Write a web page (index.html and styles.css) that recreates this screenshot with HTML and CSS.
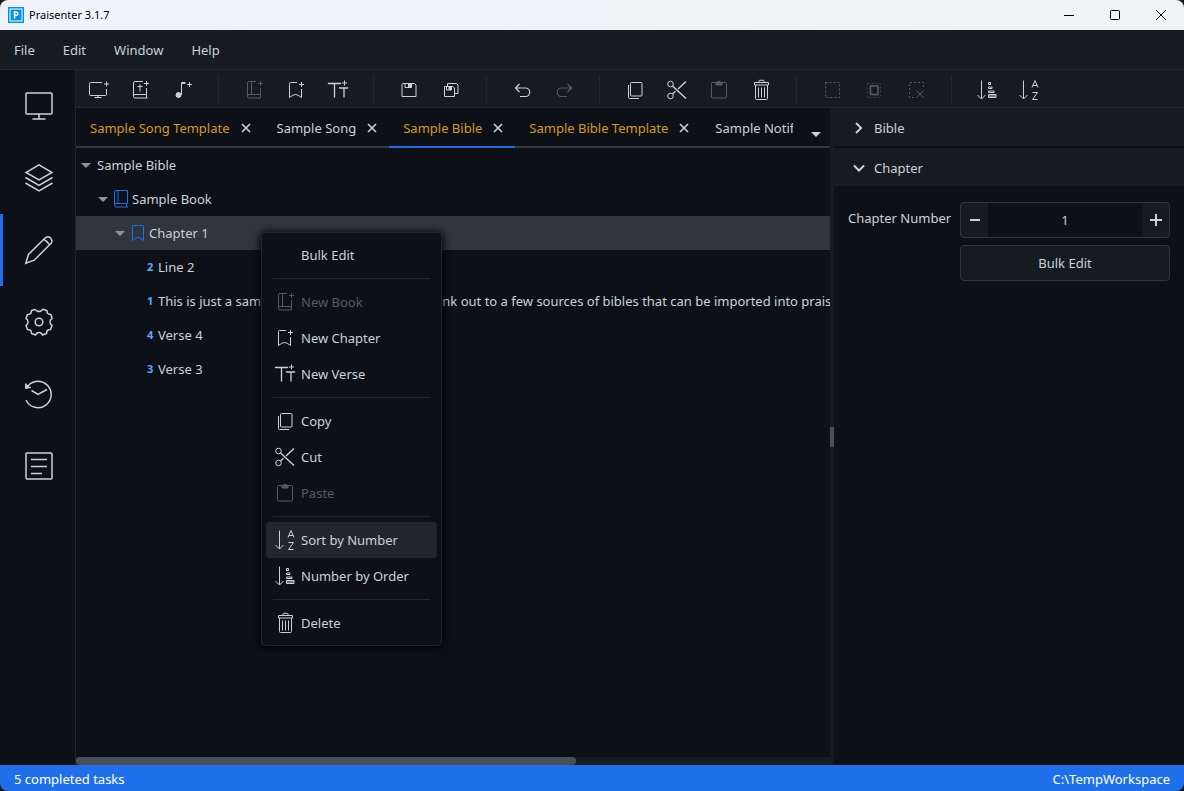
FILE: index.html
```html
<!DOCTYPE html>
<html lang="en">
<head>
<meta charset="utf-8">
<title>Praisenter 3.1.7</title>
<link rel="stylesheet" href="styles.css">
</head>
<body>
<svg class="sprite" aria-hidden="true">
  <symbol id="screen-add" viewBox="0 0 20 20"><path d="M14 2.500H2.500a1 1 0 0 0-1 1v11a1 1 0 0 0 1 1h15a1 1 0 0 0 1-1V9M10 15.500v2M6.500 17.500h7M18.500 1.500v5M16 4h5"/></symbol>
  <symbol id="bible-add" viewBox="0 0 20 20"><path d="M13 1.500H5a1.500 1.500 0 0 0-1.500 1.500v13.500a1.500 1.500 0 0 0 1.500 1.500h12.500M16.500 8v6.500H5a1.500 1.500 0 0 0-1.500 1.500M16.500 14.500v3.500M10 4.500v7M7.500 6.500h5M16.500 1v5M14 3.500h5"/></symbol>
  <symbol id="song-add" viewBox="0 0 20 20"><circle cx="6.500" cy="15" r="2.500" fill="currentColor"/><path d="M9.500 15V2.500h4M9.500 3.500h4M17.500 2v5M15 4.500h5"/></symbol>
  <symbol id="book-add" viewBox="0 0 20 20"><path d="M12 1.500H5a1.500 1.500 0 0 0-1.500 1.500v13.500a1.500 1.500 0 0 0 1.500 1.500h11.500M16.500 8v6.500H5a1.500 1.500 0 0 0-1.500 1.500M16.500 14.500v3.500M7.500 1.500v13M16.500 1v5M14 3.500h5"/></symbol>
  <symbol id="book" viewBox="0 0 20 20"><path d="M16.500 14.500V1.500H5a1.500 1.500 0 0 0-1.500 1.500v13.500a1.500 1.500 0 0 0 1.500 1.500h12M16.500 14.500H5a1.500 1.500 0 0 0-1.500 1.500M15.500 14.500v3.500M7 1.500v13"/></symbol>
  <symbol id="chapter-add" viewBox="0 0 20 20"><path d="M11 2.500H4.500a1 1 0 0 0-1 1V17.500q3.500-3 6-3t6 3V9M15.500 2v5M13 4.500h5"/></symbol>
  <symbol id="chapter" viewBox="0 0 20 20"><path d="M4.500 3a.8.8 0 0 1 .8-.5h9.400a.8.8 0 0 1 .8.8V17.500q-3-3-5.500-3t-5.500 3z"/></symbol>
  <symbol id="verse-add" viewBox="0 0 20 20"><path d="M.5 4V3.500h12V4M6.500 3.500v14M11.500 8.500V8h8v.5M16 8v9.500" stroke-width="1.300"/><path d="M16.500.5v5M14 3h5"/></symbol>
  <symbol id="save" viewBox="0 0 20 20"><path d="M4 3.500h11.500l1.500 1.500v11.500h-14V4.500a1 1 0 0 1 1-1zM6 4v3.500h6.500V4"/><path d="M9.500 4h3v3h-3z" fill="currentColor"/></symbol>
  <symbol id="save-all" viewBox="0 0 20 20"><path d="M3.500 6.500h8.500l1.500 1.500v8.500h-10zM6.500 6V3.500h9l1.500 1.500v8.500h-3M5.500 7v3h5V7"/><path d="M8 7h2.500v2.500H8z" fill="currentColor"/></symbol>
  <symbol id="undo" viewBox="0 0 20 20"><path d="M7.500 4 3.500 8l4 4M4 8h9.500a4.200 4.200 0 0 1 0 8.500H8" stroke-width="1.200"/></symbol>
  <symbol id="redo" viewBox="0 0 20 20"><path d="m13.500 4 4 4-4 4M17 8H7.500a4.200 4.200 0 0 0 0 8.500H13" stroke-width="1.200"/></symbol>
  <symbol id="copy" viewBox="0 0 20 20"><rect x="5.500" y="2.500" width="11.500" height="13.500" rx="1"/><path d="M3.500 5v12.500a1 1 0 0 0 1 1H14"/></symbol>
  <symbol id="cut" viewBox="0 0 20 20"><circle cx="3.500" cy="4" r="2.800"/><circle cx="3.500" cy="16" r="2.800"/><path d="M5.500 6 19 18.500M5.500 14 8.500 11.300M11 9l8-7.500" stroke-width="1.400"/></symbol>
  <symbol id="paste" viewBox="0 0 20 20"><rect x="2.500" y="2.500" width="15" height="15.500" rx="1"/><path d="M7 2.500 8.500 2q1.500-1.500 3 0l1.500.5v2.500H7z" fill="currentColor"/></symbol>
  <symbol id="trash" viewBox="0 0 20 20"><path d="M3.500 2.500h14v2.500h-14zM8 2.500V1a.7.700 0 0 1 .7-.7h3.600a.7.700 0 0 1 .7.700v1.500M4.500 5v13.500a1 1 0 0 0 1 1h10a1 1 0 0 0 1-1V5M7.500 7.500v10M10.500 7.500v10M13.500 7.500v10"/></symbol>
  <symbol id="select-all" viewBox="0 0 20 20"><rect x="3.500" y="2.500" width="14" height="15" stroke-dasharray="2 2"/></symbol>
  <symbol id="select-inner" viewBox="0 0 20 20"><rect x="3.500" y="3.500" width="13" height="14" stroke-dasharray="2 2" opacity=".6"/><rect x="6.500" y="6" width="7.500" height="8.500" stroke-width="1.600"/></symbol>
  <symbol id="select-none" viewBox="0 0 20 20"><path d="M8 17.500H3.500v-15h14V8" stroke-dasharray="2 2"/><path d="m10.500 10.500 7 7M17.500 10.500l-7 7"/></symbol>
  <symbol id="order" viewBox="0 0 20 20"><path d="M4.500.5v18M.5 15l4 4 4-4M11.500 2.500h2v2h-2zM11.500 7h3.500v1.500h-3.500zM11.500 11h5.500v1.500h-5.500zM11.500 14.500h7.500v3h-7.500z"/><path d="M11 16h8"/></symbol>
  <symbol id="sort" viewBox="0 0 20 20"><path d="M4.500.5v18M.5 15l4 4 4-4M13 7.500 16 .5l3 7M14 5.500h4M13.500 12.500h5l-5 7h5"/></symbol>
  <symbol id="chev-right" viewBox="0 0 12 12"><path d="m3 1 5 5-5 5" stroke-width="2"/></symbol>
  <symbol id="chev-down" viewBox="0 0 12 12"><path d="m1 3.500 5 5 5-5" stroke-width="2"/></symbol>
  <symbol id="cross" viewBox="0 0 10 10"><path d="m1 1 8 8M9 1 1 9" stroke-width="1.600"/></symbol>
</svg>

<div class="window">
  <header class="titlebar">
    <svg class="logo" viewBox="0 0 16 16" aria-hidden="true"><rect width="16" height="16" fill="#0093dd"/><rect x="2" y="2" width="12" height="12" fill="none" stroke="#fff"/><path d="M6.500 11.500V5h1.700a1.700 1.700 0 0 1 0 3.400H6.500" fill="none" stroke="#fff" stroke-width="1.600"/></svg>
    <span class="title">Praisenter 3.1.7</span>
    <div class="window-controls">
      <button aria-label="Minimize"><svg viewBox="0 0 12 12"><path d="M1 6.500h10"/></svg></button>
      <button aria-label="Maximize"><svg viewBox="0 0 12 12"><rect x="1.500" y="1.500" width="9" height="9" rx="1"/></svg></button>
      <button aria-label="Close"><svg viewBox="0 0 12 12"><path d="m1 1 10 10M11 1 1 11"/></svg></button>
    </div>
  </header>

  <nav class="menubar">
    <button>File</button><button>Edit</button><button>Window</button><button>Help</button>
  </nav>

  <div class="body">
    <nav class="sidebar">
      <button aria-label="Present"><svg viewBox="0 0 28 28"><rect x="1" y="1" width="26" height="21" rx="1"/><path d="M14 22v5M7.500 27h13"/></svg></button>
      <button aria-label="Library"><svg viewBox="0 0 28 28"><path d="M14 .8 27 8.500 14 16 1 8.500zM.5 13.500 14 21.500l13.500-8M.5 19 14 27l13.500-8"/></svg></button>
      <button class="current" aria-label="Editor"><svg viewBox="0 0 28 28"><path d="m.8 27.200 2.700-8.700L20.300 1.800q2.900-2 5.200.2t.8 5.100L9.200 24.200zM19 3.500q3 1.500 5.500 5.300"/></svg></button>
      <button aria-label="Settings"><svg viewBox="0 0 28 28"><circle cx="14" cy="14" r="3.800"/><path d="M10 1.500 12 3Q14 4 16 3L18 1.300L22 2.800L22.300 5L23.500 6L26 6.500L27 10.500L25.500 12Q24.500 14 25.500 16L27 17.500L25.500 21.500L23 22Q21.800 22.500 21.800 24L21.500 25.500L17.500 27L16 25Q14 24 12 25L10.500 27L6.500 25.500L6.200 23.500Q5.800 22.300 4.500 22L2.500 21.500L1 17.500L2.500 16Q3.500 14 2.500 12L1 10.500L2.500 6.500L4.500 6.200Q6 5.700 6.200 4.200L6.500 2.500z" stroke-linejoin="round"/></svg></button>
      <button aria-label="History"><svg viewBox="0 0 28 28"><path d="M1.500 8A13.200 13.200 0 1 1 1 20M6.500 10.500l6.500 4 9-5M.8 3.500v4.700l5-.9M.8 4.500l3 3"/></svg></button>
      <button aria-label="Tasks"><svg viewBox="0 0 28 28"><rect x="1" y="1" width="26" height="26" rx="1"/><path d="M6 7.500h16M6 14.500h16M6 21.500h11"/></svg></button>
    </nav>

    <div class="workspace">
      <div class="toolbar" role="toolbar">
        <div class="group">
          <button aria-label="New slide"><svg><use href="#screen-add"/></svg></button>
          <button aria-label="New bible"><svg><use href="#bible-add"/></svg></button>
          <button aria-label="New song"><svg><use href="#song-add"/></svg></button>
        </div>
        <div class="group">
          <button disabled aria-label="New book"><svg><use href="#book-add"/></svg></button>
          <button aria-label="New chapter"><svg><use href="#chapter-add"/></svg></button>
          <button aria-label="New verse"><svg><use href="#verse-add"/></svg></button>
        </div>
        <div class="group">
          <button aria-label="Save"><svg><use href="#save"/></svg></button>
          <button aria-label="Save all"><svg><use href="#save-all"/></svg></button>
        </div>
        <div class="group">
          <button aria-label="Undo"><svg><use href="#undo"/></svg></button>
          <button disabled aria-label="Redo"><svg><use href="#redo"/></svg></button>
        </div>
        <div class="group">
          <button aria-label="Copy"><svg><use href="#copy"/></svg></button>
          <button aria-label="Cut"><svg><use href="#cut"/></svg></button>
          <button disabled aria-label="Paste"><svg><use href="#paste"/></svg></button>
          <button aria-label="Delete"><svg><use href="#trash"/></svg></button>
        </div>
        <div class="group">
          <button disabled aria-label="Select all"><svg><use href="#select-all"/></svg></button>
          <button disabled aria-label="Invert selection"><svg><use href="#select-inner"/></svg></button>
          <button disabled aria-label="Select none"><svg><use href="#select-none"/></svg></button>
        </div>
        <div class="group">
          <button aria-label="Number by order"><svg><use href="#order"/></svg></button>
          <button aria-label="Sort by number"><svg><use href="#sort"/></svg></button>
        </div>
      </div>

      <div class="panes">
        <main class="editor">
          <div class="tabs">
            <div class="tab-list">
              <div class="tab changed"><span>Sample Song Template</span><button aria-label="Close"><svg><use href="#cross"/></svg></button></div>
              <div class="tab"><span>Sample Song</span><button aria-label="Close"><svg><use href="#cross"/></svg></button></div>
              <div class="tab changed active"><span>Sample Bible</span><button aria-label="Close"><svg><use href="#cross"/></svg></button></div>
              <div class="tab changed"><span>Sample Bible Template</span><button aria-label="Close"><svg><use href="#cross"/></svg></button></div>
              <div class="tab cut-off"><span>Sample Notifications</span></div>
            </div>
            <button class="tab-menu" aria-label="All tabs"><i class="caret"></i></button>
          </div>
          <div class="tree" role="tree">
            <div class="row" role="treeitem"><i class="caret"></i><span>Sample Bible</span></div>
            <div class="row level-1" role="treeitem"><i class="caret"></i><svg><use href="#book"/></svg><span>Sample Book</span></div>
            <div class="row level-2 selected" role="treeitem"><i class="caret"></i><svg><use href="#chapter"/></svg><span>Chapter 1</span></div>
            <div class="row level-3" role="treeitem"><b>2</b><span>Line 2</span></div>
            <div class="row level-3" role="treeitem"><b>1</b><span>This is just a sample bible for testing. See the link out to a few sources of bibles that can be imported into praisenter</span></div>
            <div class="row level-3" role="treeitem"><b>4</b><span>Verse 4</span></div>
            <div class="row level-3" role="treeitem"><b>3</b><span>Verse 3</span></div>
          </div>
          <div class="scroll-track"><div class="scroll-thumb"></div></div>
        </main>
        <div class="splitter"><i></i></div>
        <aside class="properties">
          <button class="section"><svg><use href="#chev-right"/></svg>Bible</button>
          <button class="section"><svg><use href="#chev-down"/></svg>Chapter</button>
          <div class="form">
            <label for="number">Chapter Number</label>
            <div class="spinner">
              <button aria-label="Decrease"><svg viewBox="0 0 12 12"><path d="M1 6h10" stroke-width="2"/></svg></button>
              <input id="number" type="text" value="1">
              <button aria-label="Increase"><svg viewBox="0 0 12 12"><path d="M0 6h12M6 0v12" stroke-width="2"/></svg></button>
            </div>
            <button class="bulk">Bulk Edit</button>
          </div>
        </aside>
      </div>
    </div>
  </div>

  <footer class="statusbar"><span>5 completed tasks</span><span>C:\TempWorkspace</span></footer>

  <div class="context-menu" role="menu">
    <button role="menuitem"><svg></svg>Bulk Edit</button>
    <hr>
    <button role="menuitem" disabled><svg><use href="#book-add"/></svg>New Book</button>
    <button role="menuitem"><svg><use href="#chapter-add"/></svg>New Chapter</button>
    <button role="menuitem"><svg><use href="#verse-add"/></svg>New Verse</button>
    <hr>
    <button role="menuitem"><svg><use href="#copy"/></svg>Copy</button>
    <button role="menuitem"><svg><use href="#cut"/></svg>Cut</button>
    <button role="menuitem" disabled><svg><use href="#paste"/></svg>Paste</button>
    <hr>
    <button role="menuitem" class="hover"><svg><use href="#sort"/></svg>Sort by Number</button>
    <button role="menuitem"><svg><use href="#order"/></svg>Number by Order</button>
    <hr>
    <button role="menuitem"><svg><use href="#trash"/></svg>Delete</button>
  </div>
</div>
</body>
</html>
```
FILE: styles.css
```css
* { box-sizing: border-box; }

body {
  margin: 0;
  background: #1b1b1b;
  color: #c9d1d9;
  font: 13px/20px "Noto Sans", "Open Sans", sans-serif;
}

button, input {
  margin: 0;
  padding: 0;
  border: 0;
  background: none;
  color: inherit;
  font: inherit;
}

svg {
  display: block;
  flex: none;
  overflow: visible;
  fill: none;
  stroke: currentColor;
}

symbol { overflow: visible; }
.sprite { position: absolute; width: 0; height: 0; }

.window {
  display: flex;
  flex-direction: column;
  height: 100vh;
  overflow: hidden;
  position: relative;
  border-radius: 8px;
  background: #0d1117;
}

.titlebar {
  display: flex;
  align-items: center;
  height: 30px;
  flex: none;
  padding-left: 8px;
  gap: 5px;
  background: linear-gradient(90deg, #eff3f9, #f0f4f5);
  color: #000;
}
.logo { width: 16px; height: 16px; stroke: none; }
.title { font-size: 11px; }
.window-controls { display: flex; margin-left: auto; }
.window-controls button {
  display: grid;
  place-items: center;
  width: 46px;
  height: 30px;
}
.window-controls svg { width: 12px; height: 12px; }

.menubar {
  display: flex;
  flex: none;
  height: 40px;
  border-bottom: 1px solid #21262d;
  background: #161b22;
}
.menubar button { padding: 0 14px; }

.body { display: flex; flex: 1; min-height: 0; }

.sidebar {
  display: flex;
  flex-direction: column;
  width: 76px;
  flex: none;
  border-right: 1px solid #21262d;
}
.sidebar button {
  display: grid;
  place-items: center;
  height: 72px;
  border-left: 3px solid transparent;
  padding-right: 1px;
}
.sidebar .current { border-color: #1f6feb; }
.sidebar svg { width: 28px; height: 28px; stroke-width: 1.5; }

.workspace { display: flex; flex-direction: column; flex: 1; min-width: 0; }

.toolbar {
  display: flex;
  flex: none;
  height: 38px;
  padding: 5px 1px 2px;
  border-bottom: 1px solid #21262d;
  background: #161b22;
}
.group { display: flex; }
.group + .group {
  margin-left: 15px;
  padding-left: 14px;
  border-left: 1px solid #21262d;
}
.group button {
  display: grid;
  place-items: center;
  width: 42px;
}
.group + .group button:last-child { margin-right: -1px; }
.group svg { width: 20px; height: 20px; }
button:disabled { color: #545a62; }

.panes { display: flex; flex: 1; min-height: 0; }
.editor { display: flex; flex-direction: column; flex: 1; min-width: 0; }

.tabs {
  display: flex;
  flex: none;
  height: 40px;
  padding-right: 9px;
  box-shadow: inset 0 -2px #30363d;
}
.tab-list { display: flex; flex: 1; min-width: 0; overflow: hidden; }
.tab {
  display: flex;
  flex: none;
  align-items: center;
  gap: 11px;
  padding: 2px 12px 0 14px;
  border-bottom: 2px solid transparent;
}
.tab.changed { color: #d29922; }
.tab.active { border-color: #1f6feb; }
.tab button { color: #c9d1d9; }
.tab svg { width: 10px; height: 10px; }
.tab.cut-off { flex: 1; min-width: 0; padding-right: 0; }
.tab.cut-off span { overflow: hidden; white-space: nowrap; }
.tab-menu { padding: 12px 0 0 18px; }

.caret {
  display: block;
  flex: none;
  border: 5px solid transparent;
  border-top-color: currentColor;
  border-bottom: 0;
}

.tree { flex: 1; min-height: 0; overflow: hidden; }
.row {
  display: flex;
  align-items: center;
  height: 34px;
  padding-left: 5px;
  white-space: nowrap;
}
.row .caret { margin-right: 6px; color: #8b949e; }
.row svg { width: 20px; height: 20px; margin: 0 1px 0 -3px; color: #1f6feb; }
.row.level-1 { padding-left: 22px; }
.row.level-2 { padding-left: 39px; }
.row.level-3 { padding-left: 71px; }
.row.selected { background: #30363d; }
.row b { width: 11px; flex: none; color: #58a6ff; font-size: 11px; }

.scroll-track { flex: none; height: 8px; background: #161b22; }
.scroll-thumb { width: 66.3%; height: 8px; border-radius: 4px; background: #484f58; }

.splitter {
  display: grid;
  align-items: center;
  flex: none;
  width: 4px;
  background: #161b22;
}
.splitter i { height: 20px; background: #484f58; }

.properties { width: 350px; flex: none; }
.section {
  display: flex;
  align-items: center;
  gap: 9px;
  width: 100%;
  height: 38px;
  margin-bottom: 2px;
  padding: 2px 19px 0;
  background: #161b22;
}
.section svg { width: 12px; height: 12px; }

.form {
  display: grid;
  grid-template-columns: 104px minmax(0, 1fr);
  gap: 7px 8px;
  padding: 14px;
  white-space: nowrap;
}
.form label { padding-top: 6px; }
.spinner, .bulk {
  height: 36px;
  border: 1px solid #30363d;
  border-radius: 4px;
  background: #161b22;
}
.spinner { display: flex; }
.spinner button { display: grid; place-items: center; width: 27px; flex: none; }
.spinner svg { width: 12px; height: 12px; }
.spinner input { flex: 1; min-width: 0; background: #0d1117; text-align: center; }
.bulk { grid-column: 2; }

.statusbar {
  display: flex;
  align-items: center;
  justify-content: space-between;
  flex: none;
  height: 26px;
  padding: 2px 14px 0;
  background: #1f6feb;
  color: #fff;
}

.context-menu {
  position: absolute;
  top: 232px;
  left: 261px;
  display: flex;
  flex-direction: column;
  width: 181px;
  padding: 4px;
  border: 1px solid #21262d;
  border-radius: 4px;
  background: #0d1117;
  box-shadow: 0 1px 8px 1px #000;
}
.context-menu button {
  display: flex;
  align-items: center;
  gap: 6px;
  height: 36px;
  padding: 0 9px;
  border-radius: 4px;
  white-space: nowrap;
}
.context-menu svg { width: 20px; height: 20px; }
.context-menu .hover { background: #21262d; }
.context-menu hr {
  width: 157px;
  height: 1px;
  margin: 5px 7px;
  border: 0;
  background: #21262d;
}
```
